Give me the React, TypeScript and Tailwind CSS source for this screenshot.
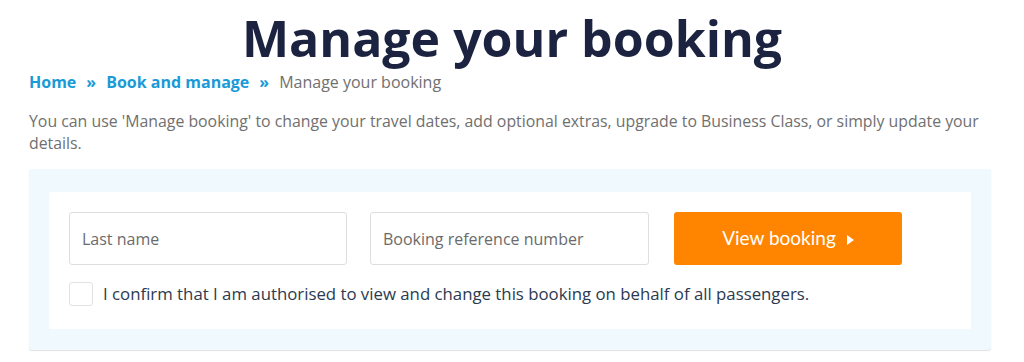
import { useState } from "react";

const sans = { fontFamily: '"Open Sans", "Noto Sans", sans-serif' };

export default function App() {
  const [lastName, setLastName] = useState("");
  const [reference, setReference] = useState("");
  const [confirmed, setConfirmed] = useState(false);

  return (
    <div className="min-h-[362px] bg-white" style={sans}>
      <h1 className="pt-[10px] text-center text-[50px] font-bold leading-[56px] text-[#1b2340]">
        Manage your booking
      </h1>

      {/* Breadcrumb */}
      <nav className="mt-[4px] flex items-center px-[29px] text-[16px] leading-[24px]">
        <a className="font-bold text-[#1a9ad6]" href="#">
          Home
        </a>
        <span className="mx-[10px] font-bold text-[#1a9ad6]">»</span>
        <a className="font-bold text-[#1a9ad6]" href="#">
          Book and manage
        </a>
        <span className="mx-[10px] font-bold text-[#1a9ad6]">»</span>
        <span className="text-[#707070]">Manage your booking</span>
      </nav>

      <p className="mt-[16px] px-[29px] text-[15.85px] leading-[22px] text-[#707070]">
        You can use 'Manage booking' to change your travel dates, add optional extras, upgrade to
        Business Class, or simply update your details.
      </p>

      {/* Booking form */}
      <div className="ml-[29px] mt-[15px] w-[962px] rounded-[3px] bg-[#eff9fe] px-[20px] pb-[21px] pt-[23px] shadow-[0_1px_1px_rgba(0,0,0,0.12)]">
        <div className="rounded-[2px] bg-white px-[20px] pb-[23px] pt-[20px]">
          <div className="flex items-center">
            <input
              value={lastName}
              onChange={(e) => setLastName(e.target.value)}
              placeholder="Last name"
              className="h-[53px] w-[278px] rounded-[3px] border border-[#dedede] px-[12px] text-[16px] text-[#333] outline-none placeholder:text-[#6b6b6b]"
            />
            <input
              value={reference}
              onChange={(e) => setReference(e.target.value)}
              placeholder="Booking reference number"
              className="ml-[23px] h-[53px] w-[279px] rounded-[3px] border border-[#dedede] px-[12px] text-[16px] text-[#333] outline-none placeholder:text-[#6b6b6b]"
            />
            <button
              type="button"
              className="ml-[25px] flex h-[53px] w-[228px] items-center justify-center gap-[11px] rounded-[3px] bg-[#ff8500] text-[19px] text-white"
              style={{ fontFamily: 'Lato, "Open Sans", sans-serif' }}
            >
              View booking
              <svg width="7" height="10" viewBox="0 0 7 10" className="mt-[2px]">
                <path d="M0 0 L7 5 L0 10 Z" fill="white" />
              </svg>
            </button>
          </div>

          <label className="mt-[17px] flex cursor-pointer items-center">
            <button
              type="button"
              onClick={() => setConfirmed(!confirmed)}
              className="flex h-[24px] w-[24px] items-center justify-center rounded-[3px] border border-[#e2e2e2] bg-white"
            >
              {confirmed && (
                <svg width="14" height="14" viewBox="0 0 14 14">
                  <path d="M2 7 L6 11 L12 3" stroke="#1a9ad6" strokeWidth="2" fill="none" />
                </svg>
              )}
            </button>
            <span className="ml-[10px] text-[16.8px] leading-[24px] text-[#2b3a4f]">
              I confirm that I am authorised to view and change this booking on behalf of all
              passengers.
            </span>
          </label>
        </div>
      </div>
    </div>
  );
}
